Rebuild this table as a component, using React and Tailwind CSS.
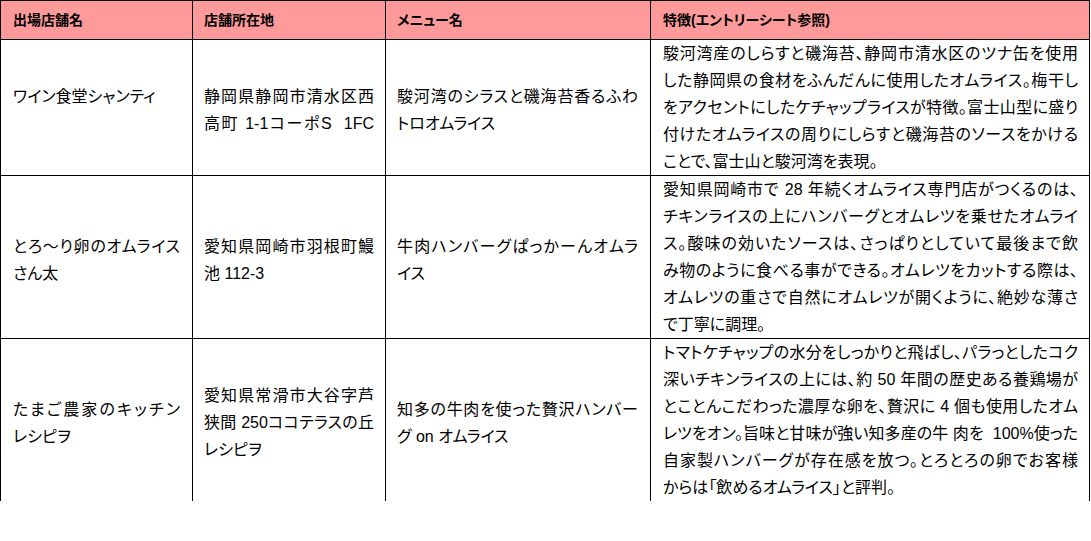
const headers = ["出場店舗名", "店舗所在地", "メニュー名", "特徴(エントリーシート参照)"];

const rows = [
  {
    name: ["ワイン食堂シャンティ", ""],
    address: ["静岡県静岡市清水区西", "高町 1-1コーポS\u00a0\u00a01FC"],
    addressFull: true,
    menu: ["駿河湾のシラスと磯海苔香るふわ", "トロオムライス"],
    feature: [
      "駿河湾産のしらすと磯海苔、静岡市清水区のツナ缶を使用",
      "した静岡県の食材をふんだんに使用したオムライス。梅干し",
      "をアクセントにしたケチャップライスが特徴。富士山型に盛り",
      "付けたオムライスの周りにしらすと磯海苔のソースをかける",
      "ことで、富士山と駿河湾を表現。",
    ],
  },
  {
    name: ["とろ〜り卵のオムライス", "さん太"],
    address: ["愛知県岡崎市羽根町鰻", "池 112-3"],
    menu: ["牛肉ハンバーグぱっかーんオムラ", "イス"],
    feature: [
      "愛知県岡崎市で 28 年続くオムライス専門店がつくるのは、",
      "チキンライスの上にハンバーグとオムレツを乗せたオムライ",
      "ス。酸味の効いたソースは、さっぱりとしていて最後まで飲",
      "み物のように食べる事ができる。オムレツをカットする際は、",
      "オムレツの重さで自然にオムレツが開くように、絶妙な薄さ",
      "で丁寧に調理。",
    ],
  },
  {
    name: ["たまご農家のキッチン", "レシピヲ"],
    address: ["愛知県常滑市大谷字芦", "狭間 250ココテラスの丘", "レシピヲ"],
    menu: ["知多の牛肉を使った贅沢ハンバー", "グ on オムライス"],
    feature: [
      "トマトケチャップの水分をしっかりと飛ばし、パラっとしたコク",
      "深いチキンライスの上には、約 50 年間の歴史ある養鶏場が",
      "とことんこだわった濃厚な卵を、贅沢に 4 個も使用したオム",
      "レツをオン。旨味と甘味が強い知多産の牛 肉を\u00a0\u00a0100%使った",
      "自家製ハンバーグが存在感を放つ。とろとろの卵でお客様",
      "からは「飲めるオムライス」と評判。",
    ],
  },
];

// a line is stretched to the cell width unless it ends the paragraph
function Lines({ lines, fullLast = false }) {
  return lines.map((text, i) => {
    const isLast = i === lines.length - 1 || !lines[i + 1];
    const stretch = text && (!isLast || fullLast);
    return (
      <div key={i} className={stretch ? "whitespace-nowrap text-justify [text-align-last:justify]" : "whitespace-nowrap"}>
        {text || "\u00a0"}
      </div>
    );
  });
}

export default function App() {
  return (
    <div
      lang="ja"
      className="w-[1091px] h-[541px] bg-white text-black font-['Liberation_Sans','Noto_Sans_CJK_JP',sans-serif] [font-feature-settings:'palt']"
    >
      <div className="grid w-[1090px] grid-cols-[192px_193px_265px_439px] border-l border-t border-black">
        {headers.map((h, i) => (
          <div
            key={h}
            className={`flex h-[39px] items-center border-b border-r border-black bg-[#ff9a9a] text-[14px] font-bold ${
              i === 0 || i === 3 ? "pl-[12px]" : "pl-[11px]"
            }`}
          >
            {h}
          </div>
        ))}

        {rows.map((row, r) => {
          const last = r === rows.length - 1;
          const cell = `border-r border-black text-[16px] leading-[27px] ${last ? "" : "border-b"}`;
          return [
            <div key={`n${r}`} className={`${cell} flex flex-col justify-center px-[12px] pt-[5px]`}>
              <Lines lines={row.name} />
            </div>,
            <div key={`a${r}`} className={`${cell} flex flex-col justify-center px-[11px] pt-[5px]`}>
              <Lines lines={row.address} fullLast={row.addressFull} />
            </div>,
            <div key={`m${r}`} className={`${cell} flex flex-col justify-center pl-[11px] pr-[12px] pt-[5px]`}>
              <Lines lines={row.menu} />
            </div>,
            <div key={`f${r}`} className={`${cell} pl-[12px] pr-[11px]`}>
              <Lines lines={row.feature} />
            </div>,
          ];
        })}
      </div>
    </div>
  );
}
